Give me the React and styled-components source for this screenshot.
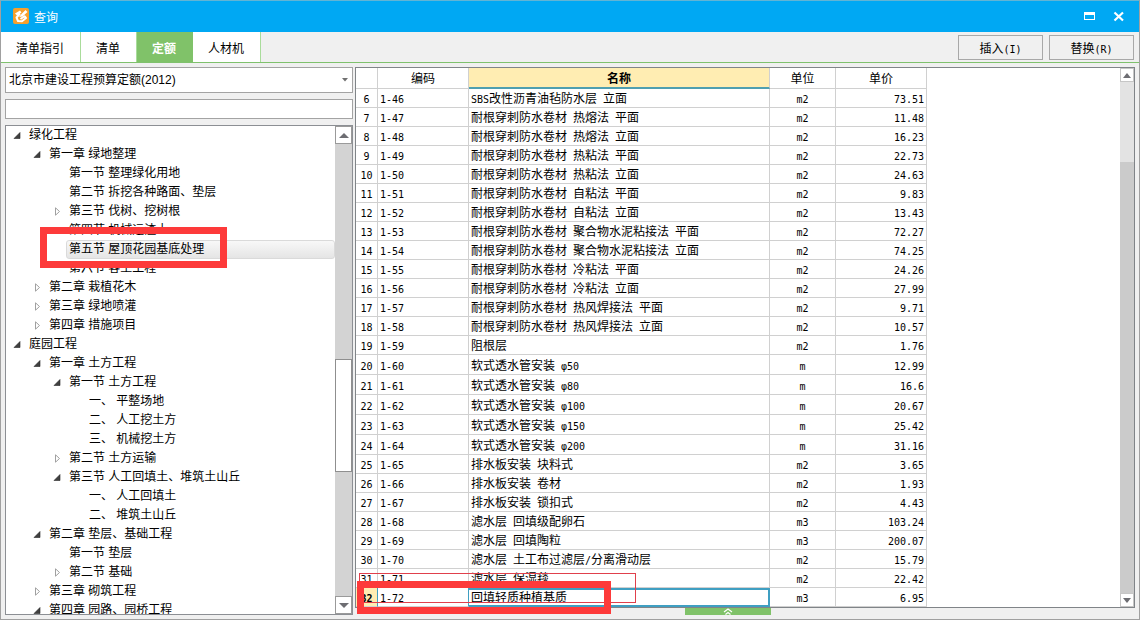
import { useState } from 'react';
import styled, { createGlobalStyle, css } from 'styled-components';

const GlobalStyle = createGlobalStyle`
    * {
        box-sizing: border-box;
    }
    body {
        margin: 0;
        font-family: "Liberation Sans", "Noto Sans CJK SC", sans-serif;
        font-size: 12px;
        color: #000;
    }
    button, input, select {
        font-family: inherit;
        font-size: inherit;
        color: inherit;
        margin: 0;
        padding: 0;
        border-radius: 0;
    }
    ul {
        list-style: none;
        margin: 0;
        padding: 0;
    }
`;

const Window = styled.div`
    display: flex;
    flex-direction: column;
    height: 100vh;
    background: #f0f0f0;
    border: 1px solid #a0a0a0;
    border-top-color: #62b4d4;
`;

const TitleBar = styled.header`
    display: flex;
    align-items: center;
    flex: 0 0 31px;
    padding: 0 14px 0 12px;
    background: #00a8f3;
    color: #fff;
    h1 {
        flex: 1;
        margin: 0 0 0 4px;
        font-size: 12px;
        font-weight: 400;
    }
`;

const WindowButton = styled.button`
    display: flex;
    width: 12px;
    height: 12px;
    margin-left: 17px;
    border: none;
    background: none;
`;

const Toolbar = styled.div`
    display: flex;
    flex: 0 0 31px;
    align-items: stretch;
    justify-content: space-between;
    padding-right: 5px;
    border-bottom: 1px solid #7fc16d;
`;

const Tabs = styled.nav`
    display: flex;
`;

const Tab = styled.button`
    padding: 0 16px 0 15px;
    border: none;
    border-right: 1px solid #a9dc9b;
    background: #fff;
    ${props => props.$active && css`
        background: #80c269;
        border-right-color: #80c269;
        color: #fff;
        font-weight: bold;
    `}
`;

const Actions = styled.div`
    display: flex;
    align-items: center;
    gap: 6px;
`;

const ActionButton = styled.button`
    width: 85px;
    height: 25px;
    border: 1px solid #a8a8a8;
    background: #f0f0f0;
`;

const Body = styled.main`
    display: flex;
    flex: 1;
    min-height: 0;
    gap: 2px;
    padding: 4px;
`;

const Sidebar = styled.section`
    display: flex;
    flex-direction: column;
    flex: 0 0 348px;
    gap: 6px;
`;

const SelectWrap = styled.div`
    display: grid;
    align-items: center;
    select, svg {
        grid-area: 1 / 1;
    }
    select {
        appearance: none;
        width: 100%;
        height: 26px;
        padding: 0 3px;
        border: 1px solid #a3a3a3;
        background: #fff;
    }
    svg {
        justify-self: end;
        margin-right: 5px;
        pointer-events: none;
    }
`;

const SearchInput = styled.input`
    height: 20px;
    padding: 0 4px;
    border: 1px solid #a3a3a3;
    background: #fff;
`;

const TreePanel = styled.div`
    position: relative;
    display: flex;
    flex: 1;
    min-height: 0;
    border: 1px solid #8c8f94;
    background: #fff;
`;

const TreeList = styled.ul`
    flex: 1;
    overflow: hidden;
`;

const TreeRow = styled.li`
    display: flex;
    height: 19px;
    line-height: 18px;
    padding-left: ${props => 7 + props.$depth * 20}px;
`;

const Toggle = styled.button`
    display: flex;
    align-items: center;
    width: 13px;
    border: none;
    background: none;
`;

const TreeLabel = styled.span`
    flex: 1;
    padding-left: 2px;
    border: 1px solid transparent;
    border-radius: 3px;
    line-height: 16px;
    white-space: pre;
    ${props => props.$selected && css`
        border-color: #dadada;
        background: linear-gradient(#f8f8f8, #e5e5e5);
    `}
`;

const ScrollTrack = styled.div`
    display: flex;
    flex-direction: column;
    flex: 0 0 ${props => (props.$wide ? 17 : 14)}px;
    background: ${props => (props.$wide ? '#d3d3d3' : '#e3e3e3')};
`;

const ScrollButton = styled.button`
    display: flex;
    align-items: center;
    justify-content: center;
    flex: 0 0 ${props => (props.$wide ? 18 : 14)}px;
    border: 1px solid ${props => (props.$wide ? '#9a9a9a' : '#c6c6c6')};
    background: #fff;
`;

const ScrollSpace = styled.div`
    flex: ${props => props.$grow} 0 0;
`;

const ScrollThumb = styled(ScrollSpace)`
    background: ${props => (props.$wide ? '#fff' : '#cbcbcb')};
    border: ${props => (props.$wide ? '1px solid #8f8f8f' : 'none')};
`;

const Content = styled.section`
    display: flex;
    flex-direction: column;
    flex: 1;
    min-width: 0;
`;

const GridPanel = styled.div`
    position: relative;
    display: flex;
    flex: 1;
    min-height: 0;
    border: 1px solid #808488;
    background: #fff;
`;

const GridScroll = styled.div`
    flex: 1;
    overflow: hidden;
`;

const Table = styled.table`
    table-layout: fixed;
    width: 571px;
    border-collapse: separate;
    border-spacing: 0;
    line-height: 16px;
    th, td {
        padding: 2px 2px 0;
        border-right: 1px solid #d0d0d0;
        border-bottom: 1px solid #d0d0d0;
        overflow: hidden;
        white-space: pre;
    }
    th {
        font-weight: 400;
        text-align: center;
    }
    thead th {
        height: 21px;
    }
`;

const SortedHead = styled.th`
    background: #ffedb2;
    && {
        font-weight: bold;
        border-bottom: 2px solid #4f9fb0;
    }
`;

const Row = styled.tr`
    height: ${props => (props.$tall ? 20 : 19)}px;
    ${props => props.$current && css`
        && th {
            background: #ffedb2;
            font-weight: bold;
            border-right-color: #3f9fc2;
        }
        && td:nth-child(2) {
            border-right-color: #3f9fc2;
        }
        && td:nth-child(3) {
            box-shadow: inset 0 2px 0 #3f9fc2, inset -1px -1px 0 #3f9fc2;
            border-color: #3f9fc2;
        }
    `}
`;

const Cell = styled.td`
    text-align: ${props => props.$align || 'left'};
`;

const Mono = styled.span`
    font-family: "DejaVu Sans Mono", monospace;
    font-size: 10px;
    line-height: 1;
`;

const Footer = styled.footer`
    display: flex;
    flex: 0 0 7px;
    padding-left: 330px;
`;

const ExpandHandle = styled.button`
    display: flex;
    justify-content: center;
    width: 86px;
    height: 7px;
    border: none;
    background: #80c269;
`;

// red annotation frames drawn over the panels
const Mark = styled.div`
    position: absolute;
    pointer-events: none;
    border: 7px solid #fd3a3a;
`;

const TreeMark = styled(Mark)`
    top: 101px;
    left: 34px;
    width: 187px;
    height: 41px;
`;

const RowMark = styled(Mark)`
    left: 1px;
    bottom: -7px;
    width: 254px;
    height: 33px;
`;

const ThinMark = styled(Mark)`
    left: 3px;
    bottom: 4px;
    width: 277px;
    height: 30px;
    border: 1px solid #e0404c;
`;

const tabs = ['清单指引', '清单', '定额', '人材机'];

// depth, label, state of the arrow
const tree = [
    [0, '绿化工程', 'open'],
    [1, '第一章 绿地整理', 'open'],
    [2, '第一节 整理绿化用地'],
    [2, '第二节 拆挖各种路面、垫层'],
    [2, '第三节 伐树、挖树根', 'closed'],
    [2, '第四节 机械运渣土'],
    [2, '第五节 屋顶花园基底处理'],
    [2, '第六节 客土工程'],
    [1, '第二章 栽植花木', 'closed'],
    [1, '第三章 绿地喷灌', 'closed'],
    [1, '第四章 措施项目', 'closed'],
    [0, '庭园工程', 'open'],
    [1, '第一章 土方工程', 'open'],
    [2, '第一节 土方工程', 'open'],
    [3, '一、 平整场地'],
    [3, '二、 人工挖土方'],
    [3, '三、 机械挖土方'],
    [2, '第二节 土方运输', 'closed'],
    [2, '第三节 人工回填土、堆筑土山丘', 'open'],
    [3, '一、 人工回填土'],
    [3, '二、 堆筑土山丘'],
    [1, '第二章 垫层、基础工程', 'open'],
    [2, '第一节 垫层'],
    [2, '第二节 基础', 'closed'],
    [1, '第三章 砌筑工程', 'closed'],
    [1, '第四章 园路、园桥工程', 'open'],
];

const quotas = [
    [6, '1-46', 'SBS改性沥青油毡防水层 立面', 'm2', '73.51'],
    [7, '1-47', '耐根穿刺防水卷材 热熔法 平面', 'm2', '11.48'],
    [8, '1-48', '耐根穿刺防水卷材 热熔法 立面', 'm2', '16.23'],
    [9, '1-49', '耐根穿刺防水卷材 热粘法 平面', 'm2', '22.73'],
    [10, '1-50', '耐根穿刺防水卷材 热粘法 立面', 'm2', '24.63'],
    [11, '1-51', '耐根穿刺防水卷材 自粘法 平面', 'm2', '9.83'],
    [12, '1-52', '耐根穿刺防水卷材 自粘法 立面', 'm2', '13.43'],
    [13, '1-53', '耐根穿刺防水卷材 聚合物水泥粘接法 平面', 'm2', '72.27'],
    [14, '1-54', '耐根穿刺防水卷材 聚合物水泥粘接法 立面', 'm2', '74.25'],
    [15, '1-55', '耐根穿刺防水卷材 冷粘法 平面', 'm2', '24.26'],
    [16, '1-56', '耐根穿刺防水卷材 冷粘法 立面', 'm2', '27.99'],
    [17, '1-57', '耐根穿刺防水卷材 热风焊接法 平面', 'm2', '9.71'],
    [18, '1-58', '耐根穿刺防水卷材 热风焊接法 立面', 'm2', '10.57'],
    [19, '1-59', '阻根层', 'm2', '1.76'],
    [20, '1-60', '软式透水管安装 φ50', 'm', '12.99'],
    [21, '1-61', '软式透水管安装 φ80', 'm', '16.6'],
    [22, '1-62', '软式透水管安装 φ100', 'm', '20.67'],
    [23, '1-63', '软式透水管安装 φ150', 'm', '25.42'],
    [24, '1-64', '软式透水管安装 φ200', 'm', '31.16'],
    [25, '1-65', '排水板安装 块料式', 'm2', '3.65'],
    [26, '1-66', '排水板安装 卷材', 'm2', '1.93'],
    [27, '1-67', '排水板安装 锁扣式', 'm2', '4.43'],
    [28, '1-68', '滤水层 回填级配卵石', 'm3', '103.24'],
    [29, '1-69', '滤水层 回填陶粒', 'm3', '200.07'],
    [30, '1-70', '滤水层 土工布过滤层/分离滑动层', 'm2', '15.79'],
    [31, '1-71', '滤水层 保湿毯', 'm2', '22.42'],
    [32, '1-72', '回填轻质种植基质', 'm3', '6.95'],
];

// half-width runs go in the mono face, the rest stays in the CJK face
function Mixed({ text }) {
    return text.split(/([\x20-\x7eφ]+)/).map((part, i) => (
        i % 2 ? <Mono key={i}>{part}</Mono> : part
    ));
}

function Logo() {
    return (
        <svg width="17" height="17" viewBox="0 0 17 17">
            <rect x="0" y="0" width="16" height="16" rx="2" fill="#f6a02c" />
            <path d="M2 5.5 L7 2.5 L8.5 4.5 L4 7.5 Z" fill="#fff" />
            <path d="M9 5.5 L12.5 2 L14.5 4 L9.5 8.5 L6 9 Z" fill="#fff" />
            <path d="M7 5.5 L3.5 9.5 L5 13 L9 13.2 L13 10 L11.5 8.2 L7.5 11" fill="none" stroke="#fff" strokeWidth="2" strokeLinejoin="round" />
        </svg>
    );
}

function Arrow({ state }) {
    return (
        <svg width="9" height="9" viewBox="0 0 9 9">
            {state === 'open'
                ? <path d="M7 1.5 V7.5 H1 Z" fill="#404040" stroke="#262626" strokeWidth="0.6" />
                : <path d="M2.5 0.8 V8.2 L6.5 4.5 Z" fill="#fff" stroke="#a0a0a0" />}
        </svg>
    );
}

function ScrollBar({ wide, before, thumb, after }) {
    const w = wide ? 10 : 8;
    return (
        <ScrollTrack $wide={wide}>
            <ScrollButton $wide={wide} aria-label="向上滚动">
                <svg width={w} height="5" viewBox="0 0 10 5" preserveAspectRatio="none"><path d="M0 5 L5 0 L10 5 Z" fill="#6d6d72" /></svg>
            </ScrollButton>
            <ScrollSpace $grow={before} />
            <ScrollThumb $wide={wide} $grow={thumb} />
            {after > 0 && <ScrollSpace $grow={after} />}
            <ScrollButton $wide={wide} aria-label="向下滚动">
                <svg width={w} height="5" viewBox="0 0 10 5" preserveAspectRatio="none"><path d="M0 0 L5 5 L10 0 Z" fill="#6d6d72" /></svg>
            </ScrollButton>
        </ScrollTrack>
    );
}

function App() {
    const [tab, setTab] = useState('定额');
    const [section, setSection] = useState(6);
    const [keyword, setKeyword] = useState('');

    return (
        <>
            <GlobalStyle />
            <Window>
                <TitleBar>
                    <Logo />
                    <h1>查询</h1>
                    <WindowButton aria-label="最大化">
                        <svg width="12" height="12" viewBox="0 0 12 12"><path d="M0 1 H11 V9 H0 Z M1 4 V8 H10 V4 Z" fill="#fff" fillRule="evenodd" /></svg>
                    </WindowButton>
                    <WindowButton aria-label="关闭">
                        <svg width="12" height="12" viewBox="0 0 12 12"><path d="M1.5 1.5 L10 9.5 M10 1.5 L1.5 9.5" stroke="#fff" strokeWidth="2.2" /></svg>
                    </WindowButton>
                </TitleBar>
                <Toolbar>
                    <Tabs>
                        {tabs.map(name => (
                            <Tab key={name} $active={name === tab} onClick={() => setTab(name)}>{name}</Tab>
                        ))}
                    </Tabs>
                    <Actions>
                        <ActionButton><Mixed text="插入(I)" /></ActionButton>
                        <ActionButton><Mixed text="替换(R)" /></ActionButton>
                    </Actions>
                </Toolbar>
                <Body>
                    <Sidebar>
                        <SelectWrap>
                            <select aria-label="定额库">
                                <option>北京市建设工程预算定额(2012)</option>
                            </select>
                            <svg width="6" height="4" viewBox="0 0 6 4"><path d="M0 0 H6 L3 3.5 Z" fill="#707070" /></svg>
                        </SelectWrap>
                        <SearchInput type="text" aria-label="搜索" value={keyword} onChange={e => setKeyword(e.target.value)} />
                        <TreePanel>
                            <TreeList>
                                {tree.map(([depth, label, state], i) => (
                                    <TreeRow key={i} $depth={depth} onClick={() => setSection(i)}>
                                        <Toggle as={state ? 'button' : 'span'} aria-label={state && label}>
                                            {state && <Arrow state={state} />}
                                        </Toggle>
                                        <TreeLabel $selected={i === section}>{label}</TreeLabel>
                                    </TreeRow>
                                ))}
                            </TreeList>
                            <ScrollBar wide before={216} thumb={112} after={125} />
                            <TreeMark />
                        </TreePanel>
                    </Sidebar>
                    <Content>
                        <GridPanel>
                            <GridScroll>
                                <Table>
                                    <colgroup>
                                        <col width="22" />
                                        <col width="91" />
                                        <col width="301" />
                                        <col width="66" />
                                        <col width="91" />
                                    </colgroup>
                                    <thead>
                                        <tr>
                                            <th></th>
                                            <th>编码</th>
                                            <SortedHead>名称</SortedHead>
                                            <th>单位</th>
                                            <th>单价</th>
                                        </tr>
                                    </thead>
                                    <tbody>
                                        {quotas.map(([no, code, name, unit, price]) => (
                                            <Row key={no} $tall={unit === 'm'} $current={no === 32}>
                                                <th><Mono>{no}</Mono></th>
                                                <Cell><Mono>{code}</Mono></Cell>
                                                <Cell><Mixed text={name} /></Cell>
                                                <Cell $align="center"><Mono>{unit}</Mono></Cell>
                                                <Cell $align="right"><Mono>{price}</Mono></Cell>
                                            </Row>
                                        ))}
                                    </tbody>
                                </Table>
                            </GridScroll>
                            <ScrollBar before={80} thumb={432} after={0} />
                            <ThinMark />
                            <RowMark />
                        </GridPanel>
                        <Footer>
                            <ExpandHandle aria-label="展开">
                                <svg width="10" height="7" viewBox="0 0 10 7"><path d="M1 4 L5 1 L9 4 M2.5 6.5 L5 4.5 L7.5 6.5" fill="none" stroke="#fff" strokeWidth="1.2" /></svg>
                            </ExpandHandle>
                        </Footer>
                    </Content>
                </Body>
            </Window>
        </>
    );
}

export default App;
